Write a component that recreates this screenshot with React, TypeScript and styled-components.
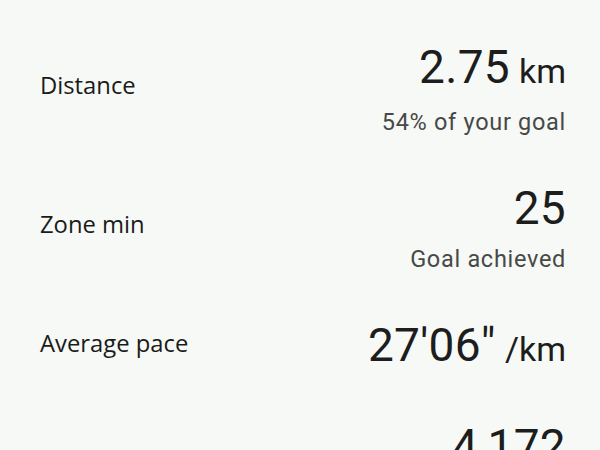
import React from "react";
import styled, { createGlobalStyle } from "styled-components";

interface IStat {
    label: string;
    value: string;
    unit?: string;
    note?: string;
}

const stats: IStat[] = [
    { label: "Distance", value: "2.75", unit: "km", note: "54% of your goal" },
    { label: "Zone min", value: "25", note: "Goal achieved" },
    { label: "Average pace", value: "27'06\"", unit: "/km" },
    { label: "Steps", value: "4,172", note: "42% of your goal" },
];

const GlobalStyle = createGlobalStyle`
    html, body {
        margin: 0;
        padding: 0;
        background-color: #f7f9f6;
        overflow: hidden;
    }
    body {
        font-family: Roboto, "Noto Sans", sans-serif;
        color: #1c1d1c;
    }
`;

const Page = styled.div`
    width: 600px;
    height: 450px;
    padding: 41px 34px 0px 40px;
    box-sizing: border-box;
    display: flex;
    flex-direction: column;
    gap: 45px;
    overflow: hidden;
`;

const Row = styled.div`
    display: flex;
    align-items: center;
    justify-content: space-between;
`;

const Label = styled.span`
    padding-bottom: 8px;
    font-family: "Open Sans", Roboto, sans-serif;
    font-size: 23.8px;
    font-weight: 500;
    color: #1a1b1a;
`;

const ValueBox = styled.div`
    display: flex;
    flex-direction: column;
    align-items: flex-end;
`;

const Value = styled.span`
    font-size: 46px;
    line-height: 52px;
    font-weight: 400;
    letter-spacing: 0.3px;
    color: #1c1d1c;
`;

const Unit = styled.span`
    margin-left: 9px;
    font-size: 34px;
    letter-spacing: 0px;
`;

const Note = styled.span`
    margin-top: 10px;
    font-size: 23.5px;
    line-height: 30px;
    color: #474947;
    letter-spacing: 0.7px;
`;

const App: React.FC = () => {
    return (
        <Page>
            <GlobalStyle />
            {stats.map((s, i) => (
                <Row key={i}>
                    <Label>{s.label}</Label>
                    <ValueBox>
                        <Value>
                            {s.value}
                            {s.unit ? <Unit>{s.unit}</Unit> : null}
                        </Value>
                        {s.note ? <Note>{s.note}</Note> : null}
                    </ValueBox>
                </Row>
            ))}
        </Page>
    );
};

export default App;
